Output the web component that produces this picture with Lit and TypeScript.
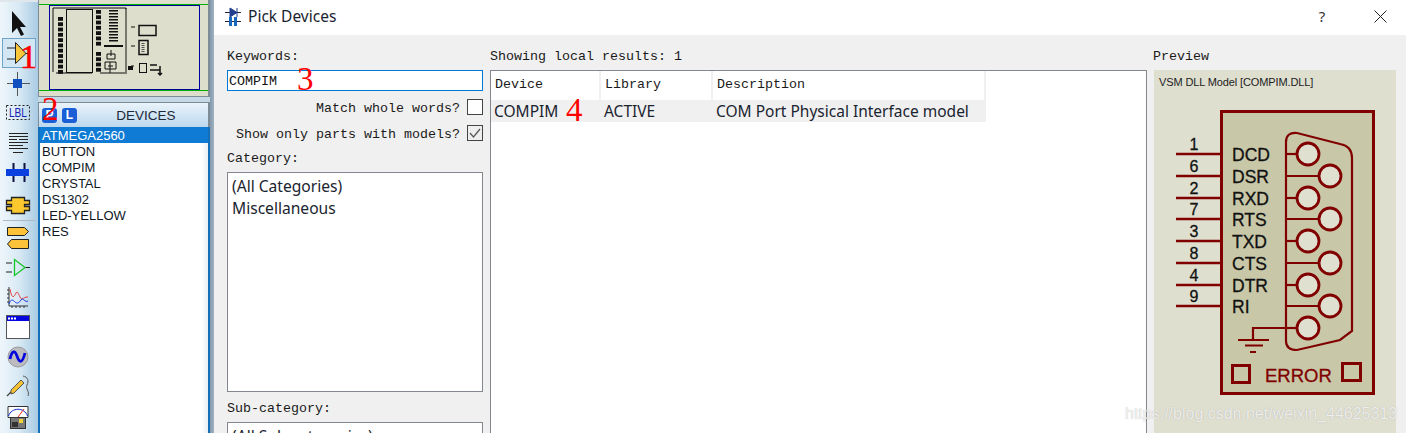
import { LitElement, html, css, svg } from 'lit';
import { customElement } from 'lit/decorators.js';

const DEVICES = ['ATMEGA2560', 'BUTTON', 'COMPIM', 'CRYSTAL', 'DS1302', 'LED-YELLOW', 'RES'];

// pin rows of the COMPIM symbol: [pin number, signal, y]
const PINS: [string, string, number][] = [
  ['1', 'DCD', 154], ['6', 'DSR', 176], ['2', 'RXD', 198], ['7', 'RTS', 219],
  ['3', 'TXD', 241], ['8', 'CTS', 263], ['4', 'DTR', 285], ['9', 'RI', 306],
];
const HOLES = [154, 176, 198, 219, 241, 263, 285, 306, 328];

// toolbar icons: x is the page x, y is relative to the 30px slot
const TOOLS = [
  svg`<path d="M12 3v22l5-5 4 8 3-1.500-4-7.500h6z" fill="#111"/>`,
  svg`<path d="M7 10h8M7 21h8M25 15.500h5" stroke="#222"/><path d="M15.500 4.500v21L26 15.500z" fill="#f9c63c" stroke="#222"/>`,
  svg`<path d="M17.500 4v24M7 15.500h23" stroke="#555"/><rect x="13" y="11" width="9" height="9" fill="#0f4fc0"/>`,
  svg`<rect x="6.500" y="7.500" width="23" height="14" fill="none" stroke="#222" stroke-dasharray="2 2"/><text x="9" y="19" textLength="18" lengthAdjust="spacingAndGlyphs" font-size="13" font-family="Liberation Sans" fill="#1620b0">LBL</text>`,
  svg`<path d="M9 5.500h19M9 8.500h19M9 11.500h8M19 11.500h9M9 14.500h19M9 17.500h14M9 20.500h19M13 24.500h10" stroke="#222"/>`,
  svg`<path d="M6 11h23v7H6z" fill="#0a3fe0"/><path d="M13.500 5v6M24.500 5v6M13.500 18v6M24.500 18v6" stroke="#114" stroke-width="2"/>`,
  svg`<path d="M11.500 9.500h13v3h5v4h-5v2h5v4h-5v3h-13v-3h-5v-4h5v-2h-5v-4h5z" fill="#fbc92e" stroke="#222" stroke-width="1.300"/>`,
];
const TOOLS2 = [
  svg`<path d="M7.500 5.500h17l4 4-4 4h-17zM28.500 17.500v9h-17l-4-4.500 4-4.500z" fill="#fbc23a" stroke="#222"/>`,
  svg`<path d="M6 11h6M6 20h6M25 15.500h5" stroke="#222"/><path d="M14.500 7.500v16L25 15.500z" fill="none" stroke="#19c52c" stroke-width="1.300"/>`,
  svg`<path d="M9 5v19h19M7 8h2M7 12h2M7 16h2M7 20h2M12 24v2M16 24v2M20 24v2M24 24v2" fill="none" stroke="#333"/><path d="M10 7c2 11 4 8 6 4s4 7 6 6 3-2 6-2" fill="none" stroke="#e33b3b"/><path d="M9 22c2-6 4-4 6-2s4 1 6-2 4 3 7 1" fill="none" stroke="#1f3ce0"/>`,
  svg`<rect x="6.500" y="3.500" width="23" height="23" fill="#fff" stroke="#555"/><rect x="7" y="4" width="22" height="5" fill="#0505e0"/><path d="M8 6.500h2M11 6.500h2M14 6.500h2" stroke="#fff" stroke-width="2"/>`,
  svg`<circle cx="18" cy="15" r="10" fill="#bcbcc0" stroke="#9a9a9a"/><path d="M10 17c2-9 5-9 7-3s5 9 8-3" fill="none" stroke="#0505e0" stroke-width="2.800"/>`,
  svg`<path d="M23 4c5 1 6 5 4 9s3 6 1 11" fill="none" stroke="#555"/><path d="M11 18 21 8l3 3-10 10-3 1z" fill="#f4c132" stroke="#555"/><path d="M11 20l-4 4" stroke="#444" stroke-width="1.300"/>`,
  svg`<path d="M8 4.500h20v11H8z" fill="#fff" stroke="#333"/><path d="M8.500 14c3-9 16-9 19 0" fill="none" stroke="#0a2ad0"/><path d="M18 15 24 7" stroke="#e22"/><rect x="10.500" y="15.500" width="15" height="11" fill="#777" stroke="#333"/><rect x="12" y="20" width="6" height="5" fill="#333"/><rect x="19" y="17" width="4" height="4" fill="#f0d43a"/>`,
];

// thumbnail of the schematic shown in the overview pane
const blocks = (x: number, w: number, y0: number, y1: number, step: number) => {
  const out = [];
  for (let y = y0; y <= y1; y += step) out.push(svg`<rect x=${x} y=${y} width=${w} height=${step - 1.500} fill="#111"/>`);
  return out;
};

@customElement('app-root')
export class AppRoot extends LitElement {
  static styles = css`
    :host {
      display: grid;
      grid-template-columns: 38px 172px 4px 1fr;
      position: relative;
      width: 1406px;
      height: 433px;
      overflow: hidden;
      background: #f0f0f0;
      font-family: "Liberation Sans", Arial, sans-serif;
    }
    .toolbar {
      display: flex;
      flex-direction: column;
      align-items: center;
      background: linear-gradient(90deg, #eef6fb 0%, #d8e9f4 50%, #a9cbe3 100%);
      box-shadow: inset 0 2px 0 #dfe6ec;
    }
    .tool { width: 36px; height: 30px; flex: none; display: block; box-sizing: border-box; }
    .tool svg { display: block; }
    .tools-top { padding-top: 8px; display: flex; flex-direction: column; }
    .on { position: relative; }
    .on::before {
      content: "";
      position: absolute;
      inset: 0 1px;
      background: #d3e6f4;
      border: 1px solid #6fa3c8;
    }
    .on svg { position: relative; }
    .sep { width: 32px; height: 1px; background: #aeb9c2; margin-top: 2px; flex: none; }
    .tools-low { display: flex; flex-direction: column; padding-top: 1px; }

    .side { display: flex; flex-direction: column; min-width: 0; }
    .overview {
      height: 97px;
      flex: none;
      box-sizing: border-box;
      background: #dedecc;
      border-left: 1px solid #7f8c95;
      border-right: 2px solid #7f8c95;
      border-bottom: 1px solid #7f8c95;
    }
    .overview svg { display: block; }
    .gap { height: 5px; flex: none; background: #c5d8e6; }
    .devices {
      flex: 1;
      display: flex;
      flex-direction: column;
      min-height: 0;
      background: #fff;
      border-top: 1px solid #7f8c95;
    }
    .dev-head {
      height: 24px;
      flex: none;
      display: flex;
      align-items: center;
      padding-left: 3px;
      gap: 5px;
      background: linear-gradient(180deg, #eaf3fa 0%, #bcd8ee 100%);
      border-left: 1px solid #7f8c95;
      border-right: 2px solid #7f8c95;
    }
    .pl {
      width: 15px;
      height: 15px;
      border-radius: 3px;
      background: #1a5fd6;
      color: #fff;
      font-size: 12px;
      font-weight: 700;
      line-height: 15px;
      text-align: center;
    }
    .dev-title { flex: 1; text-align: center; font-size: 13.500px; color: #1c2a38; padding-left: 2px; }
    .dev-list {
      flex: 1;
      border-left: 2px solid #1470b8;
      border-right: 2px solid #1470b8;
      background: linear-gradient(90deg, #fff 96%, #eceff2 100%);
      font-size: 13px;
      color: #10181f;
    }
    .dev { height: 16px; line-height: 18px; padding-left: 2px; }
    .dev.sel { background: #0f7bd4; color: #fff; }
    .divider { background: linear-gradient(90deg, #8499ab, #9fb3c3); }

    .dialog { display: flex; flex-direction: column; min-width: 0; }
    .title-bar {
      height: 35px;
      box-sizing: border-box;
      padding: 0 0 3px 11px;
      flex: none;
      background: #fff;
      display: flex;
      align-items: center;
      gap: 7px;
      font-family: "Noto Sans", sans-serif;
      font-size: 15.500px;
      color: #1a2430;
    }
    .title-bar .spacer { flex: 1; }
    .help { width: 46px; text-align: center; font-size: 15px; color: #333; margin-right: 5px; }
    .close { width: 46px; display: flex; justify-content: center; margin-right: 3px; }
    .body { flex: 1; display: flex; gap: 7px; padding: 14px 0 0 13px; min-height: 0; }
    .label {
      height: 21px;
      box-sizing: border-box;
      padding-top: 1px;
      font-family: "Liberation Mono", monospace;
      font-size: 13.330px;
      line-height: 14px;
      color: #1a1a1a;
      white-space: pre;
    }
    .col-left { width: 256px; flex: none; display: flex; flex-direction: column; }
    .input {
      height: 21px;
      box-sizing: border-box;
      border: 1px solid #0078d7;
      background: #fff;
      font-family: "Liberation Mono", monospace;
      font-size: 13.330px;
      line-height: 21px;
      padding-left: 1px;
      color: #111;
    }
    .check {
      display: flex;
      justify-content: flex-end;
      align-items: center;
      gap: 7px;
      height: 16px;
      font-family: "Liberation Mono", monospace;
      font-size: 13.330px;
      color: #1a1a1a;
      white-space: pre;
    }
    .check .t { padding-top: 2px; }
    .check.first { margin-top: 8px; }
    .check.second { margin-top: 10px; }
    .box {
      width: 16px;
      height: 16px;
      box-sizing: border-box;
      border: 1px solid #444;
      background: #fff;
      flex: none;
    }
    .box.ticked { background: #eee; }
    .box svg { display: block; }
    .lab-cat { margin-top: 10px; }
    .lab-sub { margin-top: 9px; }
    .list {
      box-sizing: border-box;
      border: 1px solid #83878e;
      background: #fff;
      flex: none;
      padding: 1px 0 0 4px;
      font-family: "Noto Sans", sans-serif;
      font-size: 15.600px;
      color: #1a2430;
    }
    .list div { height: 22px; line-height: 24px; white-space: nowrap; }
    .cat { height: 220px; }
    .sub { height: 80px; }
    .col-mid { width: 657px; flex: none; display: flex; flex-direction: column; min-height: 0; }
    .table {
      flex: 1;
      box-sizing: border-box;
      border: 1px solid #83878e;
      background: #fff;
      min-height: 0;
    }
    .row { display: grid; grid-template-columns: 110px 112px 273px; width: 495px; }
    .row.head { height: 29px; }
    .row.head span {
      border-right: 2px solid #f0f0f0;
      padding: 7px 0 0 4px;
      font-family: "Liberation Mono", monospace;
      font-size: 13.330px;
      line-height: 14px;
      color: #1a1a1a;
    }
    .row.data {
      height: 22px;
      background: #f0f0f0;
      font-family: "Noto Sans", sans-serif;
      font-size: 15.500px;
      line-height: 23px;
      color: #1a2430;
    }
    .row.data span { padding-left: 3px; white-space: nowrap; }
    .col-right { width: 242px; flex: none; display: flex; flex-direction: column; min-height: 0; }
    .col-right .label { margin-left: -1px; }
    .preview { flex: 1; background: #dfdfd0; min-height: 0; }
    .preview svg { display: block; }
    .mark {
      position: absolute;
      color: #f00;
      font-family: "Liberation Serif", serif;
      line-height: 1;
      pointer-events: none;
    }
    .m1 { left: 20px; top: 40px; font-size: 34px; -webkit-text-stroke: 0.6px #f00; }
    .m2 { left: 42px; top: 93px; font-size: 33px; }
    .m3 { left: 297px; top: 63px; font-size: 33px; }
    .m4 { left: 566px; top: 94px; font-size: 33px; }
    .watermark {
      position: absolute;
      left: 1125px;
      top: 405px;
      font-size: 16px;
      line-height: 18px;
      color: rgba(255, 255, 255, 0.78);
      text-shadow: 0 0 1px rgba(120, 120, 120, 0.55);
      white-space: nowrap;
      pointer-events: none;
    }
  `;

  private _tool(icon: unknown, cls = '') {
    return html`<div class="tool ${cls}"><svg width="36" height="30" viewBox="1 0 36 30">${icon}</svg></div>`;
  }

  private _overview() {
    return html`<svg width="169" height="96" viewBox="39 0 169 96">
      <path d="M39 4.500h169M39 90.500h169" stroke="#00b000" stroke-width="1"/>
      <rect x="49.500" y="5.500" width="150" height="84" fill="none" stroke="#0000a0"/>
      <rect x="66.500" y="9.500" width="26" height="63" fill="none" stroke="#111"/>
      <path d="M53 8h73v1M53 8v64M56 73h36M100 73h27M126 8v64" fill="none" stroke="#111"/>
      ${blocks(58, 5, 17, 70, 5.300)}
      ${blocks(96, 5, 10, 44, 5.300)}
      ${blocks(96, 5, 52, 70, 5.300)}
      ${blocks(109, 9, 10, 42, 3)}
      <rect x="104" y="45" width="19" height="2" fill="#111"/>
      <path d="M111 50v6M107 54h8v5h-8zM105 62h11v7h-11zM110 62v11M108 66h5" fill="none" stroke="#111"/>
      <path d="M131 27h4M131 46h4M131 66h3" stroke="#111"/>
      <rect x="139" y="25.500" width="17" height="10" fill="none" stroke="#111" stroke-width="1.500"/>
      <rect x="139" y="40.500" width="9" height="14" fill="none" stroke="#111" stroke-width="1.500"/>
      <path d="M143 43v9" stroke="#555" stroke-width="3" stroke-dasharray="1 1"/>
      <rect x="128" y="66" width="5" height="4" fill="#111"/>
      <rect x="139.500" y="63.500" width="7" height="9" fill="none" stroke="#111"/>
      <path d="M150 65h7M150 70h10M160 66v9M158 73l2 2 2-2" fill="none" stroke="#111" stroke-width="1.500"/>
    </svg>`;
  }

  private _symbol() {
    // symbol is drawn in page coordinates, preview pane starts at (1154, 70)
    return html`<svg width="242" height="363" viewBox="1154 70 242 363" font-family="Liberation Sans, Arial, sans-serif">
      <text x="1159" y="86" font-size="11" letter-spacing="-0.120" fill="#222">VSM DLL Model [COMPIM.DLL]</text>
      <rect x="1221.500" y="111.500" width="152" height="282" fill="#c8c8a8" stroke="#800000" stroke-width="3"/>
      ${PINS.map(([n, name, y]) => svg`
        <path d="M1176 ${y}h45" stroke="#800000" stroke-width="2.500"/>
        <text x="1194" y=${y - 4} font-size="16" text-anchor="middle" fill="#111" stroke="#111" stroke-width=".3">${n}</text>
        <text x="1232" y=${y + 7} font-size="17.500" fill="#111" stroke="#111" stroke-width=".3">${name}</text>
      `)}
      <path d="M1286 341V142q0-10 11-9l43 11q12 2 12 14v173l-12 9-43 10q-11 0-11-9z" fill="none" stroke="#800000" stroke-width="2.200"/>
      ${HOLES.map((y, i) => {
        const cx = i % 2 ? 1330 : 1308;
        return svg`
          <path d="M1286 ${y}H${cx}" stroke="#800000" stroke-width="2.200"/>
          <circle cx=${cx} cy=${y} r="11" fill="#e0e0d0" stroke="#800000" stroke-width="2.800"/>
        `;
      })}
      <path d="M1297 328h-44v12M1238 340h31M1245 345.500h18M1250 352h6" fill="none" stroke="#800000" stroke-width="2.200"/>
      <rect x="1232.500" y="365.500" width="17" height="17" fill="none" stroke="#800000" stroke-width="3"/>
      <rect x="1342.500" y="363.500" width="18" height="17" fill="none" stroke="#800000" stroke-width="3"/>
      <text x="1265" y="382" font-size="18.500" fill="#800000" stroke="#800000" stroke-width=".3">ERROR</text>
    </svg>`;
  }

  render() {
    return html`
      <div class="toolbar">
        <div class="tools-top">
          ${TOOLS.map((t, i) => this._tool(t, i === 1 ? 'on' : ''))}
        </div>
        <div class="sep"></div>
        <div class="tools-low">${TOOLS2.map(t => this._tool(t))}</div>
      </div>

      <div class="side">
        <div class="overview">${this._overview()}</div>
        <div class="gap"></div>
        <div class="devices">
          <div class="dev-head">
            <div class="pl">P</div><div class="pl">L</div>
            <div class="dev-title">DEVICES</div>
          </div>
          <div class="dev-list">
            ${DEVICES.map((d, i) => html`<div class="dev ${i === 0 ? 'sel' : ''}">${d}</div>`)}
          </div>
        </div>
      </div>
      <div class="divider"></div>

      <div class="dialog">
        <div class="title-bar">
          <svg width="16" height="19" viewBox="0 0 16 19">
            <path d="M0 5.500h16M0 14.500h16" stroke="#223"/>
            <path d="M5 1v9l7-4.500zM12 1v9" fill="#1f3f8f" stroke="#1f3f8f"/>
            <path d="M4 10h3v9H4zM9 10h3v9H9z" fill="#1668c0"/>
          </svg>
          <span>Pick Devices</span>
          <span class="spacer"></span>
          <span class="help">?</span>
          <span class="close">
            <svg width="13" height="13" viewBox="0 0 13 13"><path d="M.5.5l12 12M12.500.5l-12 12" stroke="#222"/></svg>
          </span>
        </div>
        <div class="body">
          <div class="col-left">
            <div class="label">Keywords:</div>
            <div class="input">COMPIM</div>
            <div class="check first"><span class="t">Match whole words?</span><span class="box"></span></div>
            <div class="check second"><span class="t">Show only parts with models?</span><span class="box ticked"><svg width="14" height="14" viewBox="0 0 14 14"><path d="M2 7l3.500 4L12 3" fill="none" stroke="#555" stroke-width="1.200"/></svg></span></div>
            <div class="label lab-cat">Category:</div>
            <div class="list cat"><div>(All Categories)</div><div>Miscellaneous</div></div>
            <div class="label lab-sub">Sub-category:</div>
            <div class="list sub"><div>(All Sub-categories)</div></div>
          </div>
          <div class="col-mid">
            <div class="label">Showing local results: 1</div>
            <div class="table">
              <div class="row head"><span>Device</span><span>Library</span><span>Description</span></div>
              <div class="row data"><span>COMPIM</span><span>ACTIVE</span><span>COM Port Physical Interface model</span></div>
            </div>
          </div>
          <div class="col-right">
            <div class="label">Preview</div>
            <div class="preview">${this._symbol()}</div>
          </div>
        </div>
      </div>

      <span class="mark m1">1</span>
      <span class="mark m2">2</span>
      <span class="mark m3">3</span>
      <span class="mark m4">4</span>
      <div class="watermark">https://blog.csdn.net/weixin_44625313</div>
    `;
  }
}

declare global {
  interface HTMLElementTagNameMap { 'app-root': AppRoot; }
}
